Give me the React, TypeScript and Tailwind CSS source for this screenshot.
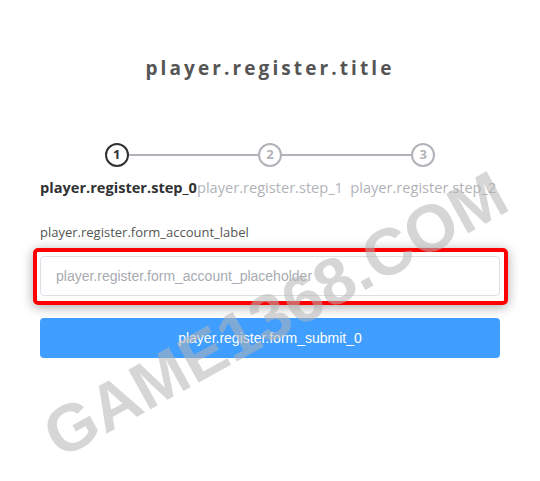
import React from 'react';

const steps = ['player.register.step_0', 'player.register.step_1', 'player.register.step_2'];

export default function App() {
  return (
    <div className="relative min-h-[481px] w-[540px] overflow-hidden bg-white" style={{ fontFamily: '"Open Sans", "Noto Sans", sans-serif' }}>
      <div className="px-10 pt-[55px]">
        <h1 className="text-center text-[19px] font-bold leading-[26px] tracking-[3.1px] text-[#555]">
          player.register.title
        </h1>

        {/* steps */}
        <div className="mt-[62px]">
          <div className="grid grid-cols-3">
            {steps.map((s, i) => (
              <div key={s} className="relative flex justify-center">
                {i < steps.length - 1 && (
                  <div className="absolute left-[calc(50%+12px)] right-[calc(-50%+12px)] top-[11px] h-[2px] bg-[#b1b3b8]" />
                )}
                <div
                  className={
                    i === 0
                      ? 'relative z-10 flex h-6 w-6 items-center justify-center rounded-full border-2 border-[#303133] bg-white text-[13px] font-bold text-[#303133]'
                      : 'relative z-10 flex h-6 w-6 items-center justify-center rounded-full border-2 border-[#b1b3b8] bg-white text-[13px] font-bold text-[#b1b3b8]'
                  }
                >
                  {i + 1}
                </div>
              </div>
            ))}
          </div>
          <div className="mt-[10px] grid grid-cols-3">
            {steps.map((s, i) => (
              <div
                key={s}
                className={
                  i === 0
                    ? 'whitespace-nowrap text-center text-[14.6px] font-bold leading-5 text-[#303133]'
                    : 'whitespace-nowrap text-center text-[14.6px] leading-5 text-[#b1b3b8]'
                }
              >
                {s}
              </div>
            ))}
          </div>
        </div>

        {/* form */}
        <div className="mt-[25px] text-[13px] leading-5 text-[#555]">player.register.form_account_label</div>
        <div className="relative mt-[14px]">
          <input
            className="block h-10 w-full rounded border border-[#dcdfe6] px-[15px] text-[14px] outline-none placeholder:text-[#a8abb2]"
            style={{ fontFamily: '"Liberation Sans", Arial, sans-serif' }}
            placeholder="player.register.form_account_placeholder"
          />
          <div className="pointer-events-none absolute -bottom-[9px] -left-[7px] -right-[8px] -top-[8px] rounded-[5px] border-4 border-[#ff0000] shadow-[0_2px_12px_rgba(0,0,0,0.35)]" />
        </div>
        <button
          className="mt-[22px] block h-10 w-full rounded bg-[#409eff] text-[14px] text-white"
          style={{ fontFamily: '"Liberation Sans", Arial, sans-serif' }}
        >
          player.register.form_submit_0
        </button>
      </div>

      {/* watermark */}
      <div
        className="pointer-events-none absolute left-[275px] top-[314px] whitespace-nowrap text-[66px] font-bold leading-none text-[rgba(180,180,180,0.55)]"
        style={{ fontFamily: '"Liberation Sans", Arial, sans-serif', transform: 'translate(-50%, -50%) rotate(-29deg)' }}
      >
        GAME1368.COM
      </div>
    </div>
  );
}
